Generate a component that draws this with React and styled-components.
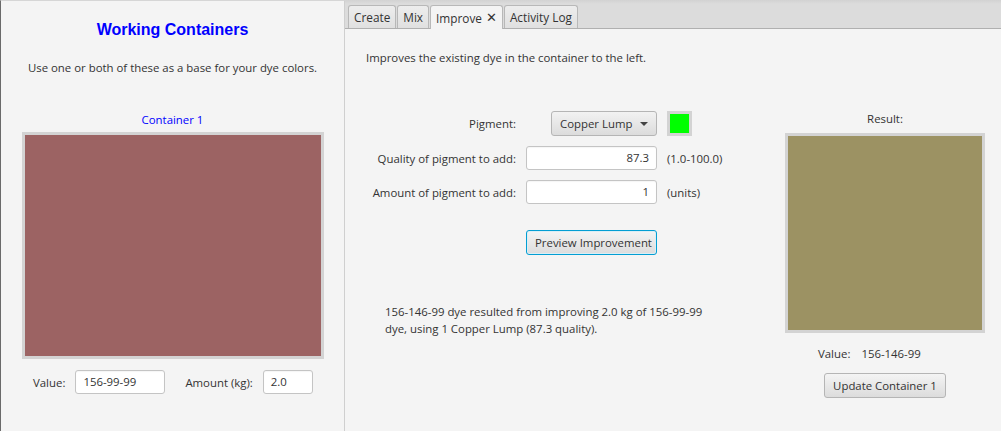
import React from "react";
import styled, { createGlobalStyle } from "styled-components";

const Global = createGlobalStyle`
  html, body { margin: 0; padding: 0; }
  body { font-family: "Open Sans", "Noto Sans", sans-serif; font-size: 11.4px; color: #333; background: #f4f4f4; }
  * { box-sizing: border-box; }
`;

const Root = styled.div`
  display: flex;
  width: 1001px;
  height: 431px;
  overflow: hidden;
  background: #f4f4f4;
`;

const LeftPanel = styled.div`
  width: 345px;
  flex: none;
  display: flex;
  flex-direction: column;
  align-items: center;
  border-left: 1px solid #6a6a6a;
  border-top: 1px solid #d6d6d6;
  border-right: 1px solid #cfcfcf;
  background: #f4f4f4;
`;

const Title = styled.div`
  font-family: "Liberation Sans", Arial, sans-serif;
  font-weight: bold;
  font-size: 16px;
  color: #0000ff;
  margin-top: 19px;
  height: 20px;
  line-height: 20px;
`;

const Desc = styled.div`
  margin-top: 19px;
  height: 18px;
  line-height: 18px;
`;

const ContainerLabel = styled.div`
  margin-top: 34px;
  color: #0000ff;
  height: 18px;
  line-height: 18px;
`;

const Swatch = styled.div`
  margin-top: ${(p) => p.$mt}px;
  width: ${(p) => p.$w}px;
  height: ${(p) => p.$h}px;
  border: 3px solid #d3d3d3;
  background: ${(p) => p.$color};
`;

const FieldRow = styled.div`
  display: flex;
  align-items: center;
  margin-top: 11px;
  align-self: flex-start;
  padding-left: 32px;
`;

const Label = styled.span`
  white-space: nowrap;
  color: #333;
  margin-left: ${(p) => p.$ml || 0}px;
`;

const TextInput = styled.div`
  width: ${(p) => p.$w}px;
  height: 24px;
  line-height: 22px;
  padding: 0 7px;
  background: #fff;
  border: 1px solid #c4c4c4;
  border-radius: 3px;
  box-shadow: inset 0 1px 1px rgba(0,0,0,0.04);
  text-align: ${(p) => (p.$right ? "right" : "left")};
  margin-left: ${(p) => p.$ml || 0}px;
  color: #333;
`;

const RightPanel = styled.div`
  flex: 1;
  display: flex;
  flex-direction: column;
`;

const TabBar = styled.div`
  height: 29px;
  flex: none;
  background: linear-gradient(#d2d2d2 0px, #dcdcdc 4px, #dcdcdc);
  border-bottom: 1px solid #b0b0b0;
  display: flex;
  align-items: flex-end;
  padding-left: 3px;
  gap: 1px;
`;

const Tab = styled.div`
  padding: 0 5px;
  display: flex;
  align-items: center;
  gap: 4px;
  border: 1px solid #b8b8b8;
  border-bottom: none;
  border-radius: 3px 3px 0 0;
  background: ${(p) => (p.$active ? "#f4f4f4" : "linear-gradient(#ededed, #e0e0e0)")};
  color: #333;
  font-size: 11.8px;
  margin-bottom: ${(p) => (p.$active ? "-1px" : "0")};
  height: ${(p) => (p.$active ? "24px" : "23px")};
`;

const Content = styled.div`
  flex: 1;
  display: flex;
  flex-direction: column;
  background: #f4f4f4;
`;

const Intro = styled.div`
  margin: 20px 0 0 21px;
  height: 18px;
  line-height: 18px;
`;

const Body = styled.div`
  display: flex;
  margin-top: 44px;
`;

const FormCol = styled.div`
  width: 440px;
  flex: none;
  display: flex;
  flex-direction: column;
`;

const FormGrid = styled.div`
  display: grid;
  grid-template-columns: 171px 131px auto;
  column-gap: 10px;
  row-gap: 10px;
  align-items: center;
`;

const GridLabel = styled.div`
  text-align: right;
  white-space: nowrap;
`;

const ControlCell = styled.div`
  display: flex;
  justify-content: flex-end;
`;

const Combo = styled.div`
  width: 106px;
  height: 25px;
  display: flex;
  align-items: center;
  justify-content: space-between;
  padding: 0 8px 0 8px;
  border: 1px solid #b5b5b5;
  border-radius: 3px;
  background: linear-gradient(#f2f2f2, #dcdcdc);
`;

const Arrow = styled.span`
  width: 0;
  height: 0;
  border-left: 4px solid transparent;
  border-right: 4px solid transparent;
  border-top: 4px solid #444;
`;

const Chip = styled.div`
  width: 25px;
  height: 25px;
  border: 3px solid #d3d3d3;
  background: #00ff00;
`;

const Button = styled.div`
  height: 25px;
  line-height: 23px;
  padding: 0 8px;
  border: 1px solid ${(p) => (p.$focus ? "#039ed3" : "#b5b5b5")};
  box-shadow: ${(p) => (p.$focus ? "inset 0 0 0 1px #dbeef5" : "none")};
  border-radius: 3px;
  background: linear-gradient(#f4f4f4, #dcdcdc);
  color: #333;
  white-space: nowrap;
  text-align: center;
  width: ${(p) => (p.$w ? p.$w + "px" : "auto")};
`;

const ButtonRow = styled.div`
  display: flex;
  padding-left: ${(p) => p.$pl}px;
  margin-top: ${(p) => p.$mt}px;
`;

const Summary = styled.div`
  margin: 48px 0 0 40px;
  width: 330px;
  line-height: 17px;
`;

const ResultCol = styled.div`
  display: flex;
  flex-direction: column;
  align-items: center;
  width: 200px;
  margin-top: -1px;
`;

const ResultLabel = styled.div`
  height: 18px;
  line-height: 18px;
`;

const ValueLine = styled.div`
  margin-top: 12px;
  align-self: flex-start;
  margin-left: 33px;
  display: flex;
  gap: 11px;
  height: 18px;
  line-height: 18px;
`;

const Close = styled.span`
  font-size: 13px;
  line-height: 1;
`;

export default function App() {
  return (
    <Root>
      <Global />
      <LeftPanel>
        <Title>Working Containers</Title>
        <Desc>Use one or both of these as a base for your dye colors.</Desc>
        <ContainerLabel>Container 1</ContainerLabel>
        <Swatch $mt={3} $w={302} $h={227} $color="#9c6363" />
        <FieldRow>
          <Label>Value:</Label>
          <TextInput $w={90} $ml={10}>156-99-99</TextInput>
          <Label $ml={20}>Amount (kg):</Label>
          <TextInput $w={50} $ml={10}>2.0</TextInput>
        </FieldRow>
      </LeftPanel>
      <RightPanel>
        <TabBar>
          <Tab>Create</Tab>
          <Tab>Mix</Tab>
          <Tab $active>
            Improve <Close>✕</Close>
          </Tab>
          <Tab>Activity Log</Tab>
        </TabBar>
        <Content>
          <Intro>Improves the existing dye in the container to the left.</Intro>
          <Body>
            <FormCol>
              <FormGrid>
                <GridLabel>Pigment:</GridLabel>
                <ControlCell>
                  <Combo>
                    Copper Lump <Arrow />
                  </Combo>
                </ControlCell>
                <Chip />
                <GridLabel>Quality of pigment to add:</GridLabel>
                <TextInput $w={131} $right>87.3</TextInput>
                <Label>(1.0-100.0)</Label>
                <GridLabel>Amount of pigment to add:</GridLabel>
                <TextInput $w={131} $right>1</TextInput>
                <Label>(units)</Label>
              </FormGrid>
              <ButtonRow $pl={181} $mt={26}>
                <Button $focus $w={131}>Preview Improvement</Button>
              </ButtonRow>
              <Summary>
                156-146-99 dye resulted from improving 2.0 kg of 156-99-99 dye, using 1 Copper Lump (87.3 quality).
              </Summary>
            </FormCol>
            <ResultCol>
              <ResultLabel>Result:</ResultLabel>
              <Swatch $mt={5} $w={200} $h={200} $color="#9c9263" />
              <ValueLine>
                <span>Value:</span>
                <span>156-146-99</span>
              </ValueLine>
              <ButtonRow $pl={0} $mt={10}>
                <Button>Update Container 1</Button>
              </ButtonRow>
            </ResultCol>
          </Body>
        </Content>
      </RightPanel>
    </Root>
  );
}
